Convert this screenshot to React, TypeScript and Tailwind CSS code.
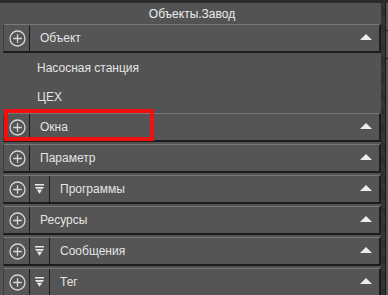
import { ReactNode } from "react";

const font = { fontFamily: '"Liberation Sans", Arial, sans-serif' };

function PlusCircle() {
  return (
    <svg width="17" height="17" viewBox="0 0 17 17" aria-hidden>
      <circle cx="8.5" cy="8.5" r="7.5" fill="none" stroke="#d6d6d6" strokeWidth="1.3" />
      <path d="M8.5 4.2v8.6M4.2 8.5h8.6" stroke="#d6d6d6" strokeWidth="1.3" />
    </svg>
  );
}

function FilterIcon() {
  return (
    <svg width="9" height="10" viewBox="0 0 9 10" aria-hidden>
      <rect x="0" y="0" width="9" height="1.5" fill="#e8e8e8" />
      <path d="M0 3h9L4.5 9.8z" fill="#e8e8e8" />
      <rect x="0" y="4.8" width="9" height="0.9" fill="#555" />
    </svg>
  );
}

function Caret() {
  return (
    <svg width="12" height="6" viewBox="0 0 12 6" aria-hidden>
      <path d="M6 0L12 6H0z" fill="#ececec" />
    </svg>
  );
}

function Row({ label, filter }: { label: string; filter?: boolean }) {
  return (
    <div className="mb-[2px] flex h-[29px] shrink-0 border-t border-b-2 border-r-2 border-l border-t-[#777] border-b-[#1c1c1c] border-r-[#1c1c1c] border-l-[#3c3c3c] bg-[#555]">
      <div className="flex w-[26px] items-center justify-center border-r border-[#1c1c1c] pl-[1px]">
        <PlusCircle />
      </div>
      {filter && (
        <div className="flex w-[20px] items-center justify-center border-r border-[#1c1c1c]">
          <FilterIcon />
        </div>
      )}
      <div className="flex flex-1 items-center pl-[10px] text-[12px] text-[#e4e4e4]">
        {label}
      </div>
      <div className="flex items-center pr-[7px] pb-[2px]">
        <Caret />
      </div>
    </div>
  );
}

function Item({ children }: { children: ReactNode }) {
  return (
    <div className="flex h-[29px] shrink-0 items-center pb-[3px] pl-[34px] text-[12px] text-[#e4e4e4]">
      {children}
    </div>
  );
}

export default function App() {
  return (
    <div className="flex h-[295px] w-[388px] overflow-hidden bg-[#2b2b2b] pt-[3px]" style={font}>
      <div className="flex w-[381px] shrink-0 flex-col bg-[#535353] pl-[3px]">
        <div className="flex h-[21px] shrink-0 items-center justify-center text-[12px] text-[#ececec]">
          Объекты.Завод
        </div>
        <div className="flex shrink-0 flex-col">
          <Row label="Объект" />
          <Item>Насосная станция</Item>
          <Item>ЦЕХ</Item>
          <div className="relative shrink-0">
            <Row label="Окна" />
            <div className="pointer-events-none absolute left-[1px] top-[-4px] h-[32px] w-[150px] border-[4px] border-[#f01010]" />
          </div>
          <Row label="Параметр" />
          <Row label="Программы" filter />
          <Row label="Ресурсы" />
          <Row label="Сообщения" filter />
          <Row label="Тег" filter />
        </div>
      </div>
      <div className="w-[4px] shrink-0 bg-[repeating-linear-gradient(45deg,#2a2a2a_0px,#2a2a2a_1px,#3a3a3a_1px,#3a3a3a_2px)]" />
      <div className="flex flex-1 flex-col border-l border-[#1c1c1c] bg-[#555]">
        <div className="h-[28px] shrink-0 border-b border-[#1c1c1c]" />
        <div className="h-[28px] shrink-0 border-b border-[#1c1c1c]" />
      </div>
    </div>
  );
}
